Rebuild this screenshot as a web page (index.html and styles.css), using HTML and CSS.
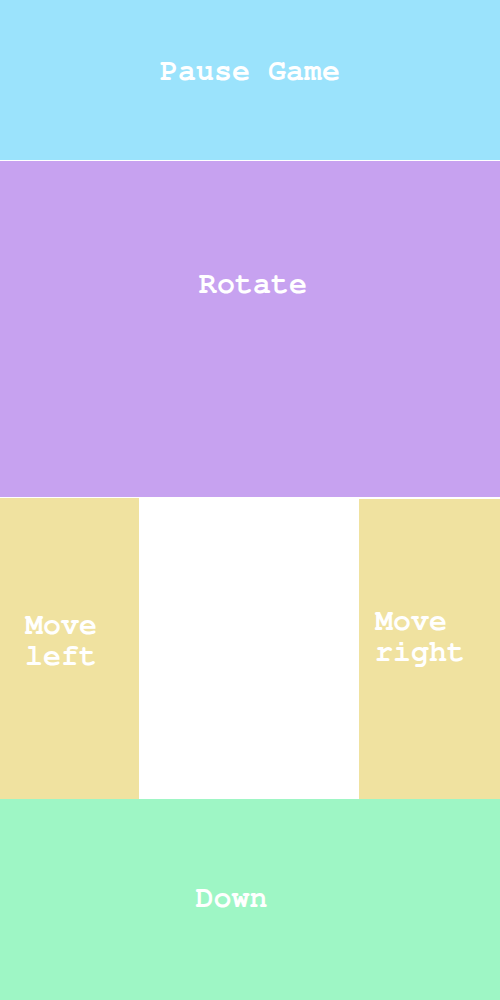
FILE: index.html
```html
<!DOCTYPE html>
<html>
<head>
<meta charset="utf-8">
<link rel="stylesheet" href="styles.css">
</head>
<body>
<div class="pad">
  <div class="btn pause">Pause Game</div>
  <div class="btn rotate">Rotate</div>
  <div class="row">
    <div class="btn side left">Move<br>left</div>
    <div class="middle"></div>
    <div class="btn side right">Move<br>right</div>
  </div>
  <div class="btn down">Down</div>
</div>
</body>
</html>
```
FILE: styles.css
```css
html, body {
  margin: 0;
  padding: 0;
  background: #ffffff;
}
.pad {
  width: 500px;
  height: 1000px;
  display: flex;
  flex-direction: column;
  overflow: hidden;
}
.btn {
  box-sizing: border-box;
  color: #ffffff;
  font-family: "Nimbus Mono PS", "Nimbus Mono L", "FreeMono", "Courier 10 Pitch", "Courier", "Liberation Mono", monospace;
  font-weight: bold;
  font-size: 30px;
  line-height: 34px;
  display: flex;
  justify-content: center;
  align-items: flex-start;
}
.pause {
  height: 160px;
  background: #9be3fc;
  padding-top: 54px;
}
.rotate {
  margin-top: 1px;
  height: 336px;
  background: #c7a2f0;
  padding-top: 106px;
  padding-left: 6px;
}
.row {
  height: 302px;
  display: flex;
  align-items: flex-start;
}
.side {
  background: #f0e2a0;
  line-height: 31px;
  justify-content: flex-start;
  height: 301px;
}
.left {
  width: 139px;
  margin-top: 1px;
  padding-top: 112px;
  padding-left: 25px;
}
.middle {
  width: 220px;
}
.right {
  width: 141px;
  margin-top: 2px;
  height: 300px;
  padding-top: 107px;
  padding-left: 16px;
}
.down {
  flex: 1;
  background: #9ef6c5;
  padding-top: 82px;
  padding-right: 37px;
}
```
